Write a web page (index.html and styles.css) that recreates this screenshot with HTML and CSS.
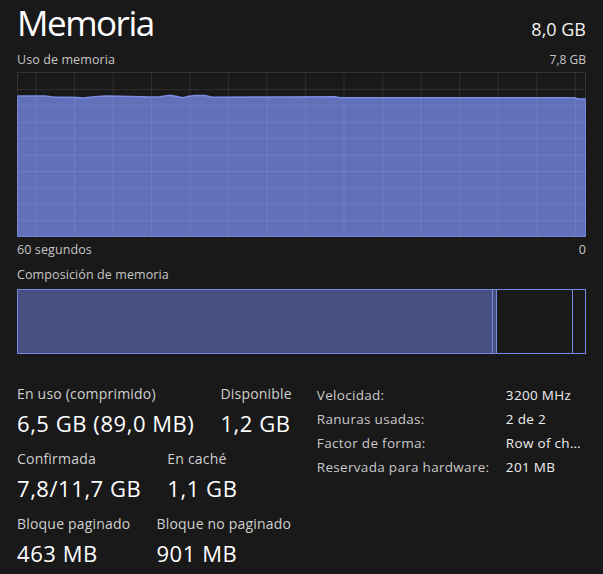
FILE: index.html
```html
<!DOCTYPE html>
<html lang="es">
<head>
<meta charset="utf-8">
<title>Memoria</title>
<link rel="stylesheet" href="styles.css">
</head>
<body>
<main class="page">
  <header class="head">
    <h1 class="title">Memoria</h1>
    <div class="total">8,0 GB</div>
  </header>

  <div class="caption top-caption"><span>Uso de memoria</span><span class="small-num">7,8 GB</span></div>

  <div class="graph">
    <svg class="graph-svg" width="569" height="165" viewBox="0 0 569 165">
      <rect class="g-frame" x="0.5" y="0.5" width="568" height="164"></rect>
      <path class="g-fill" d="M0.5 24 L28 24 L38 25.3 L53 25.3 L60 25.6 L66 26 L75 25 L88 24 L103 24.3 L133 25 L143 24.7 L153 23.3 L160 24.6 L166 25.7 L172 24.4 L178 23.5 L188 23.5 L195 25.3 L260 25 L318 24.8 L323 25.7 L558 25.7 L561 27 L568.5 27 L568.5 164.5 L0.5 164.5 Z"></path>
      <g class="g-grid">
        <path d="M19 1V164M57.5 1V164M96 1V164M134.6 1V164M173 1V164M211.6 1V164M250 1V164M288.6 1V164M327 1V164M365.7 1V164M404 1V164M442.7 1V164M481 1V164M519.8 1V164M558.3 1V164"></path>
        <path d="M1 17.5H568M1 33.9H568M1 50.3H568M1 66.7H568M1 83.1H568M1 99.5H568M1 115.9H568M1 132.3H568M1 148.7H568"></path>
      </g>
      <path class="g-edge" d="M0.5 24 V164.5 H568.5 V27"></path>
      <path class="g-line" d="M0.5 24 L28 24 L38 25.3 L53 25.3 L60 25.6 L66 26 L75 25 L88 24 L103 24.3 L133 25 L143 24.7 L153 23.3 L160 24.6 L166 25.7 L172 24.4 L178 23.5 L188 23.5 L195 25.3 L260 25 L318 24.8 L323 25.7 L558 25.7 L561 27 L568.5 27"></path>
    </svg>
  </div>

  <div class="caption axis-caption"><span>60 segundos</span><span>0</span></div>
  <div class="caption comp-caption"><span>Composición de memoria</span></div>

  <div class="comp">
    <div class="seg seg-used"></div>
    <div class="seg seg-modified"></div>
    <div class="seg seg-standby"></div>
    <div class="seg seg-free"></div>
  </div>

  <section class="stats">
    <div class="stat-groups">
      <div class="stat-row">
        <div class="stat"><div class="stat-label">En uso (comprimido)</div><div class="stat-value">6,5 GB (89,0 MB)</div></div>
        <div class="stat"><div class="stat-label">Disponible</div><div class="stat-value">1,2 GB</div></div>
      </div>
      <div class="stat-row">
        <div class="stat"><div class="stat-label">Confirmada</div><div class="stat-value">7,8/11,7 GB</div></div>
        <div class="stat"><div class="stat-label">En caché</div><div class="stat-value">1,1 GB</div></div>
      </div>
      <div class="stat-row">
        <div class="stat"><div class="stat-label">Bloque paginado</div><div class="stat-value">463 MB</div></div>
        <div class="stat"><div class="stat-label">Bloque no paginado</div><div class="stat-value">901 MB</div></div>
      </div>
    </div>
    <dl class="props">
      <div class="prop"><dt>Velocidad:</dt><dd>3200 MHz</dd></div>
      <div class="prop"><dt>Ranuras usadas:</dt><dd>2 de 2</dd></div>
      <div class="prop"><dt>Factor de forma:</dt><dd>Row of ch…</dd></div>
      <div class="prop"><dt>Reservada para hardware:</dt><dd>201 MB</dd></div>
    </dl>
  </section>
</main>
</body>
</html>
```

FILE: styles.css
```css
html, body {
  margin: 0;
  padding: 0;
  background: #191919;
}

body {
  font-family: "Open Sans", "Noto Sans", "Liberation Sans", sans-serif;
  color: #ffffff;
  width: 603px;
  height: 574px;
  overflow: hidden;
}

.page {
  padding: 0 17px;
  width: 569px;
}

.head {
  display: flex;
  justify-content: space-between;
  align-items: baseline;
}

.title {
  margin: 0;
  font-size: 35px;
  line-height: 46px;
  letter-spacing: -1.5px;
  font-weight: 400;
  color: #ffffff;
}

.total {
  font-size: 18px;
  line-height: 24px;
  color: #f2f2f2;
}

.caption {
  display: flex;
  justify-content: space-between;
  font-size: 12.5px;
  letter-spacing: 0.1px;
  line-height: 16px;
  height: 16px;
  color: #c6c6c6;
}

.small-num {
  font-size: 12px;
  letter-spacing: 0;
}

.top-caption {
  margin-top: 6px;
  margin-bottom: 4px;
}

.graph {
  height: 165px;
}

.graph-svg {
  display: block;
}

.g-frame {
  fill: none;
  stroke: #333333;
  stroke-width: 1;
}

.g-fill {
  fill: #6170b9;
}

.g-grid path {
  fill: none;
  stroke: rgba(255, 255, 255, 0.09);
  stroke-width: 1;
}

.g-edge {
  fill: none;
  stroke: #7484d6;
  stroke-width: 1;
}

.g-line {
  fill: none;
  stroke: #7a8ce4;
  stroke-width: 1.6;
}

.axis-caption {
  margin-top: 5px;
}

.comp-caption {
  margin-top: 9px;
  margin-bottom: 6px;
}

.comp {
  display: flex;
  height: 63px;
  border: 1px solid #7888e6;
}

.seg {
  height: 100%;
}

.seg-used {
  width: 474px;
  background: #45507f;
  border-right: 1px solid #7888e6;
}

.seg-modified {
  width: 3px;
  background: #45507f;
  border-right: 1px solid #7888e6;
}

.seg-standby {
  width: 75px;
  border-right: 1px solid #7888e6;
}

.seg-free {
  flex: 1;
}

.stats {
  display: flex;
  align-items: flex-start;
  gap: 25px;
  margin-top: 29px;
}

.stat-groups {
  display: flex;
  flex-direction: column;
  gap: 12px;
  padding-top: 1px;
}

.stat-row {
  display: flex;
  gap: 26px;
}

.stat {
  display: flex;
  flex-direction: column;
  gap: 5px;
}

.stat-label {
  font-size: 14px;
  letter-spacing: 0.2px;
  line-height: 20px;
  color: #d0d0d0;
}

.stat-value {
  font-size: 22px;
  letter-spacing: 0.55px;
  line-height: 28px;
  color: #ffffff;
}

.props {
  margin: 0;
  display: flex;
  flex-direction: column;
}

.prop {
  display: grid;
  grid-template-columns: 189px 80px;
  font-size: 13.5px;
  letter-spacing: 0.3px;
  line-height: 24px;
}

.prop dt {
  color: #c8c8c8;
}

.prop dd {
  margin: 0;
  color: #ededed;
  white-space: nowrap;
}
```
